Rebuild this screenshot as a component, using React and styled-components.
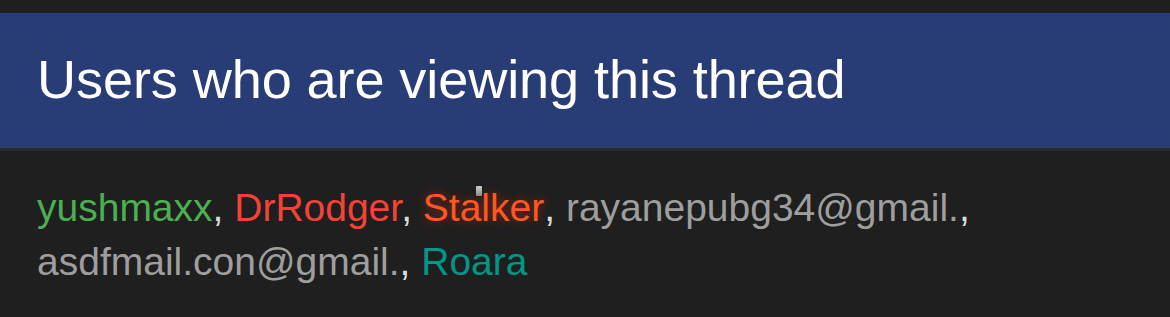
import React from "react";
import styled, { createGlobalStyle } from "styled-components";

const Global = createGlobalStyle`
  html, body { margin: 0; padding: 0; background: #1f1f1f; }
  body { font-family: "Liberation Sans", Arial, sans-serif; }
`;

const Page = styled.div`
  width: 1170px;
  height: 317px;
  background: #1f1f1f;
  padding-top: 13px;
  box-sizing: border-box;
`;

const Block = styled.section`
  display: flex;
  flex-direction: column;
`;

const Header = styled.h3`
  margin: 0;
  height: 138px;
  box-sizing: border-box;
  display: flex;
  align-items: center;
  padding: 0 37px 4px;
  background: #283d75;
  border-bottom: 3px solid #2a2a2a;
  color: #ffffff;
  font-weight: 400;
  font-size: 54.1px;
  letter-spacing: -0.1px;
`;

const Body = styled.div`
  padding: 30px 37px 0;
  font-size: 39px;
  line-height: 54px;
  color: #dcdcdc;
`;

const User = styled.span`
  position: relative;
  color: ${(p) => p.$color};
  text-shadow: ${(p) => (p.$glow ? `0 0 10px rgba(255, 60, 20, 0.45)` : "none")};
`;

const Sparkle = styled.span`
  position: absolute;
  left: 53px;
  top: 0px;
  width: 6px;
  height: 10px;
  background: linear-gradient(#cfcfcf, #8a8a8a);
  border-radius: 1px;
`;

const users = [
  { name: "yushmaxx", color: "#4caf50" },
  { name: "DrRodger", color: "#f44336" },
  { name: "Stalker", color: "#ff5722", glow: true },
  { name: "rayanepubg34@gmail.", color: "#9e9e9e" },
  { name: "asdfmail.con@gmail.", color: "#9e9e9e" },
  { name: "Roara", color: "#009688" },
];

export default function App() {
  return (
    <Page>
      <Global />
      <Block>
        <Header>Users who are viewing this thread</Header>
        <Body>
          {users.map((u, i) => (
            <React.Fragment key={u.name}>
              <User $color={u.color} $glow={u.glow}>
                {u.name}
                {u.glow && <Sparkle />}
              </User>
              {i < users.length - 1 && ", "}
            </React.Fragment>
          ))}
        </Body>
      </Block>
    </Page>
  );
}
